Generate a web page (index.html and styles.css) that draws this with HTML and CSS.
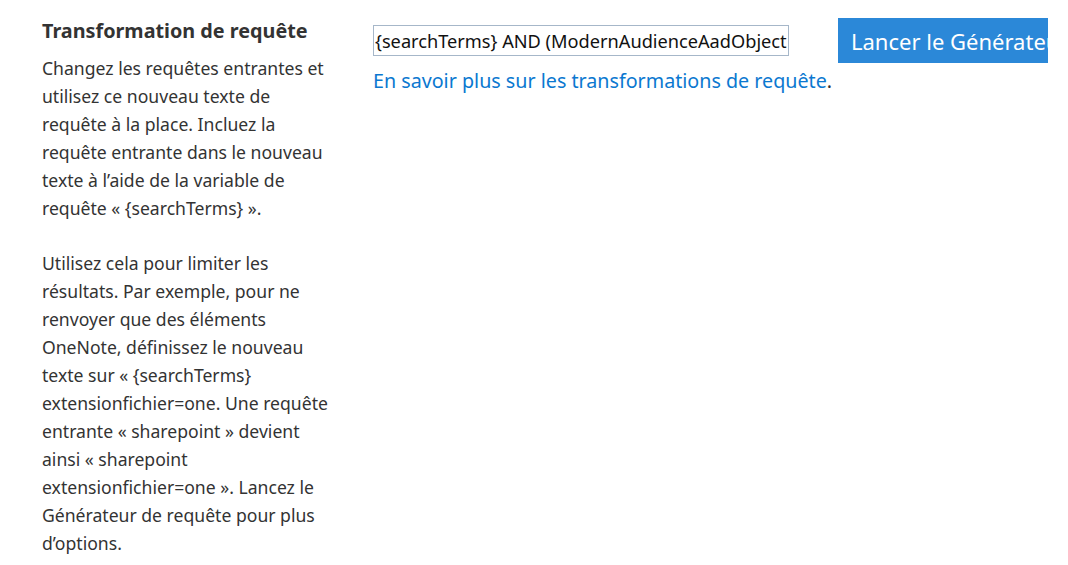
FILE: index.html
```html
<!DOCTYPE html>
<html lang="fr">
<head>
    <meta charset="UTF-8">
    <title>Transformation de requête</title>
    <link rel="stylesheet" href="styles.css">
</head>
<body>
    <div class="page">
        <!-- Description column -->
        <div class="info">
            <h2>Transformation de requête</h2>
            <p>Changez les requêtes entrantes et utilisez ce nouveau texte de requête à la place. Incluez la requête entrante dans le nouveau texte à l’aide de la variable de requête « {searchTerms} ».</p>
            <p>Utilisez cela pour limiter les résultats. Par exemple, pour ne renvoyer que des éléments OneNote, définissez le nouveau texte sur « {searchTerms} extensionfichier=one. Une requête entrante « sharepoint » devient ainsi « sharepoint extensionfichier=one ». Lancez le Générateur de requête pour plus d’options.</p>
        </div>

        <!-- Query field -->
        <div class="field">
            <div class="field-row">
                <input type="text" class="query-input" value="{searchTerms} AND (ModernAudienceAadObjectIds:{User.Audiences} OR NOT IsAudienceTargeted:true)">
                <button class="launch-btn">Lancer le Générateur de requête</button>
            </div>
            <div class="more"><a href="#">En savoir plus sur les transformations de requête</a>.</div>
        </div>
    </div>
</body>
</html>
```

FILE: styles.css
```css
body {
    margin: 0;
    font-family: "Noto Sans", "Open Sans", sans-serif;
    color: #333;
    background: #fff;
}

.page {
    display: flex;
    padding: 18px 20px 0 42px;
    width: 1006px;
    overflow: hidden;
}

.info {
    width: 296px;
    flex-shrink: 0;
}

.info h2 {
    margin: 1px 0 11px 0;
    font-size: 19.8px;
    font-weight: bold;
    line-height: 24px;
    white-space: nowrap;
}

.info p {
    margin: 0 0 27px 0;
    font-size: 17.6px;
    line-height: 28px;
}

.field {
    margin-left: 35px;
    flex: 1;
    min-width: 0;
    overflow: hidden;
}

.field-row {
    display: flex;
    align-items: center;
    gap: 49px;
}

.query-input {
    width: 416px;
    height: 31px;
    box-sizing: border-box;
    border: 1px solid #a6b7c9;
    padding: 0 1px;
    font-family: inherit;
    font-size: 18.2px;
    color: #111;
    flex-shrink: 0;
}

.launch-btn {
    flex-shrink: 0;
    height: 45px;
    border: none;
    background-color: #2b88d8;
    color: #fff;
    font-family: inherit;
    font-size: 22px;
    padding: 0 13px;
    white-space: nowrap;
    cursor: pointer;
}

.more {
    margin-top: 3px;
    font-size: 19.7px;
    line-height: 30px;
    color: #333;
}

.more a {
    color: #0b78d0;
    text-decoration: none;
}
```
